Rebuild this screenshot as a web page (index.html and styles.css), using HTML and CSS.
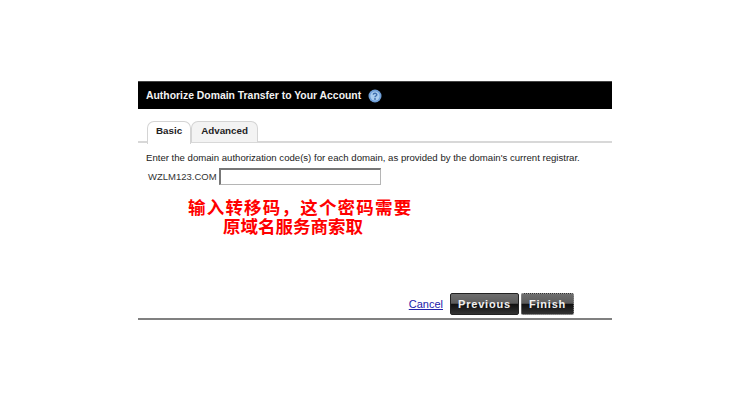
FILE: index.html
```html
<!DOCTYPE html>
<html>
<head>
    <title>Authorize Domain Transfer</title>
    <link rel="stylesheet" href="styles.css">
</head>
<body>
    <div class="panel">
        <div class="header">
            <span class="header-title">Authorize Domain Transfer to Your Account</span>
            <svg class="help-icon" width="14" height="14" viewBox="0 0 14 14">
                <circle cx="7" cy="7" r="6.5" fill="#6f9fd8"/>
                <circle cx="7" cy="7" r="4.6" fill="#a9cdf0"/>
                <path d="M5.2 5.6 C5.4 3.8 8.9 3.9 8.8 5.8 C8.7 7 7 7 7 8.2" fill="none" stroke="#3f6fae" stroke-width="1.4"/>
                <circle cx="7" cy="10" r="0.9" fill="#3f6fae"/>
            </svg>
        </div>
        <div class="tabs">
            <div class="tab tab-active">Basic</div>
            <div class="tab">Advanced</div>
        </div>
        <div class="content">
            <div class="intro">Enter the domain authorization code(s) for each domain, as provided by the domain's current registrar.</div>
            <div class="domain-row">
                <span class="domain-name">WZLM123.COM</span>
                <input type="text" class="auth-input">
            </div>
            <div class="note">
                <div class="note-first">输入转移码，这个密码需要</div>
                <div class="note-second">原域名服务商索取</div>
            </div>
        </div>
        <div class="actions">
            <a href="#" class="cancel">Cancel</a>
            <button class="btn btn-previous">Previous</button>
            <button class="btn btn-finish">Finish</button>
        </div>
    </div>
</body>
</html>
```

FILE: styles.css
```css
body {
    margin: 0;
    background: #fff;
    font-family: "Liberation Sans", Arial, sans-serif;
}
.panel {
    width: 474px;
    margin: 81px 0 0 138px;
    border-bottom: 2px solid #808080;
}
.header {
    display: flex;
    align-items: center;
    height: 27px;
    padding-left: 8px;
    background: #000;
    border-top: 1px solid #444;
}
.header-title {
    color: #f2f2f2;
    font-size: 10.4px;
    font-weight: bold;
}
.help-icon {
    margin-left: 7px;
}
.tabs {
    display: flex;
    height: 20px;
    margin-top: 12px;
    padding-left: 9px;
    border-bottom: 2px solid #d8d8d8;
}
.tab {
    height: 17px;
    padding: 3px 9px 0;
    background: #f3f3f3;
    border: 1px solid #d4d4d4;
    border-bottom: none;
    border-radius: 7px 7px 0 0;
    color: #222;
    font-size: 9.8px;
    font-weight: bold;
}
.tab-active {
    height: 19px;
    padding: 3px 8px 0;
    background: #fff;
    position: relative;
    z-index: 1;
}
.content {
    height: 141px;
    padding: 9px 0 0 8px;
}
.intro {
    color: #222;
    font-size: 9.6px;
    line-height: 12px;
}
.domain-row {
    display: flex;
    align-items: center;
    margin-top: 4px;
    padding-left: 2px;
}
.domain-name {
    width: 71px;
    color: #333;
    font-size: 9.5px;
}
.auth-input {
    width: 162px;
    height: 17px;
    padding: 0;
    box-sizing: border-box;
    background: #fff;
    border: 1px solid #b5b5b5;
    border-top: 2px solid #777;
    border-left: 2px solid #777;
}
.note {
    margin: 12px 0 0 42px;
    width: 226px;
    color: #f00;
    font-family: "Noto Sans CJK SC", sans-serif;
    font-size: 17.5px;
    font-weight: bold;
    line-height: 19px;
    white-space: nowrap;
}
.note-first {
    letter-spacing: 1.2px;
}
.note-second {
    margin-left: 35px;
}
.actions {
    display: flex;
    justify-content: flex-end;
    align-items: center;
    height: 22px;
    padding: 0 38px 3px 0;
}
.cancel {
    margin-right: 7px;
    color: #2222aa;
    font-size: 11px;
}
.btn {
    height: 22px;
    padding: 0;
    background: linear-gradient(#6e6e6e 0, #5c5c5c 46%, #111 52%, #333 100%);
    border: 1px solid #222;
    border-radius: 2px;
    color: #f0f0f0;
    font-family: "Liberation Sans", Arial, sans-serif;
    font-size: 11px;
    font-weight: bold;
    letter-spacing: 0.8px;
}
.btn-previous {
    width: 69px;
    margin-right: 2px;
}
.btn-finish {
    width: 53px;
    border: 1px dotted #999;
}
```
